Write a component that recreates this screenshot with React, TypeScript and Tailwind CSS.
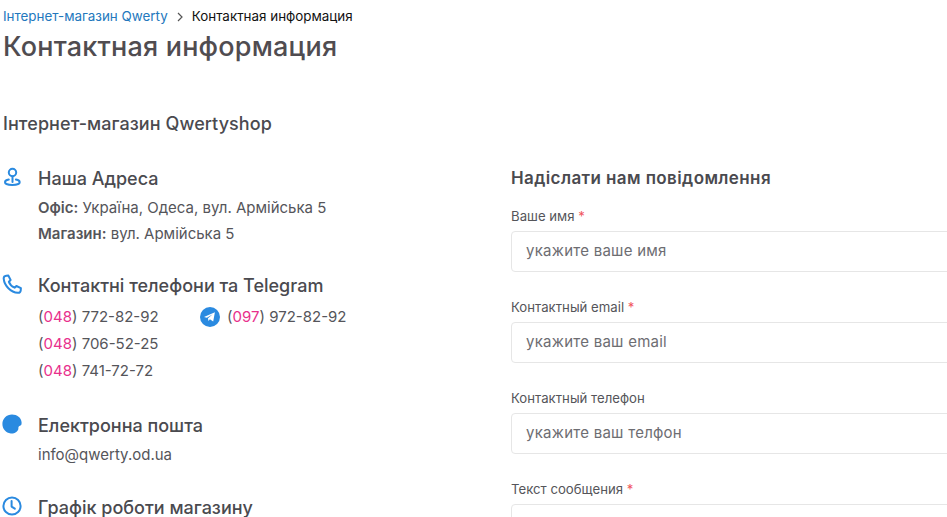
import React from "react";

function PinIcon() {
  return (
    <svg width="20" height="20" viewBox="0 0 20 20" fill="none" stroke="#2a8ae0" strokeWidth="2" strokeLinecap="round" className="shrink-0">
      <circle cx="10.5" cy="5.5" r="3.7" />
      <path d="M10.5 9.5V15" />
      <path d="M6.8 12.6C4.3 13.1 3 14 3 15.2 3 16.8 6.2 18 10.3 18s7.4-1.2 7.4-2.8c0-1.2-1.3-2.1-3.8-2.6" />
    </svg>
  );
}

function PhoneIcon() {
  return (
    <svg width="20" height="20" viewBox="0 0 20 20" fill="none" stroke="#2a8ae0" strokeWidth="2" strokeLinejoin="round" strokeLinecap="round" className="shrink-0">
      <path d="M4.2 1.8 6.4 1.6 8.6 6 6.9 7.8C7.8 10.4 10.2 12.6 12.6 13.7L14.4 12 18.9 14.2 18.7 16.6C18.5 18 17.2 18.9 15.9 18.8 8.8 18.2 2.3 11.8 1.7 4.6 1.6 3.2 2.8 2 4.2 1.8Z" />
    </svg>
  );
}

function TelegramIcon() {
  return (
    <svg width="20" height="20" viewBox="0 0 20 20" className="shrink-0">
      <circle cx="10" cy="10" r="10" fill="#2a8ae0" />
      <path d="M4 9.9 14.9 5.3 13.2 14.6 9.9 12.3 8.4 13.9 8 11.3 12.7 7.3 6.9 10.8Z" fill="#fff" />
    </svg>
  );
}

function BlobIcon() {
  return (
    <svg width="20" height="20" viewBox="0 0 20 20" className="shrink-0">
      <path d="M10 .6C15 .6 19.4 3.8 19.6 8.4 19.7 10.6 19.2 11.2 18.4 11.4 17 11.8 16.2 12.8 16.4 14.3 16.6 16 15.2 18 12.6 18.9 11 19.4 9.8 19.6 8.8 19.4 3.8 18.8.4 15 .4 10 .4 4.8 4.6.6 10 .6Z" fill="#2a8ae0" />
    </svg>
  );
}

function ClockIcon() {
  return (
    <svg width="20" height="20" viewBox="0 0 20 20" fill="none" stroke="#2a8ae0" strokeWidth="2" strokeLinecap="round" strokeLinejoin="round" className="shrink-0">
      <circle cx="10" cy="10" r="8.6" />
      <path d="M9.6 5v5.6l3.2 2" />
    </svg>
  );
}

function Code({ n }: { n: string }) {
  return (
    <span>
      (<span className="text-[#e8308c]">{n}</span>)
    </span>
  );
}

function Heading({ children }: { children: React.ReactNode }) {
  return <h3 className="text-[18px] leading-[24px] font-medium text-[#4a4a4f]">{children}</h3>;
}

function Field({ label, required, placeholder }: { label: string; required?: boolean; placeholder: string }) {
  return (
    <div className="mb-[26px]">
      <div className="text-[13.2px] leading-[18px] text-[#55555a] mb-[6px]">
        {label}
        {required && <span className="text-[#f0525a]"> *</span>}
      </div>
      <div className="w-[600px] h-[41px] border border-[#e6e6e6] rounded-[4px] pl-[14px] flex items-center text-[15px] tracking-[0.25px] text-[#6d6d72] bg-white">
        {placeholder}
      </div>
    </div>
  );
}

export default function App() {
  return (
    <div className="h-[517px] w-[947px] overflow-hidden bg-white font-['Inter','Noto_Sans',sans-serif]">
      <div className="pl-[3px]">
        <div className="flex items-center h-[17px] mt-[8px] text-[13.4px] leading-[17px]">
          <span className="text-[#2378bd]">Інтернет-магазин Qwerty</span>
          <svg width="8" height="10" viewBox="0 0 8 10" fill="none" stroke="#555" strokeWidth="1.2" className="mx-[8px]">
            <path d="M2 1l4 4-4 4" />
          </svg>
          <span className="text-[#111]">Контактная информация</span>
        </div>
        <h1 className="mt-[6px] text-[27px] leading-[32px] font-medium text-[#504c50] tracking-[0.2px]">Контактная информация</h1>
        <h2 className="mt-[49px] text-[18px] leading-[24px] font-medium tracking-[0.07px] text-[#4a4a4f]">Інтернет-магазин Qwertyshop</h2>
      </div>
      <div className="flex mt-[29px]">
        <div className="w-[511px] shrink-0 pt-[2px]">
          <div className="flex gap-[16px] pl-[2px]">
            <PinIcon />
            <div className="text-[15px] text-[#55555a]">
              <Heading>Наша Адреса</Heading>
              <div className="mt-[4px] leading-[26px]"><b className="font-semibold">Офіс:</b> Україна, Одеса, вул. Армійська 5</div>
              <div className="leading-[26px]"><b className="font-semibold">Магазин:</b> вул. Армійська 5</div>
            </div>
          </div>
          <div className="flex gap-[16px] pl-[2px] mt-[27px]">
            <PhoneIcon />
            <div className="text-[15px] text-[#55555a]">
              <Heading>Контактні телефони та Telegram</Heading>
              <div className="mt-[5px] leading-[27px] flex items-center">
                <span className="w-[162px]"><Code n="048" /> 772-82-92</span>
                <TelegramIcon />
                <span className="ml-[7px]"><Code n="097" /> 972-82-92</span>
              </div>
              <div className="leading-[27px]"><Code n="048" /> 706-52-25</div>
              <div className="leading-[27px]"><Code n="048" /> 741-72-72</div>
            </div>
          </div>
          <div className="flex gap-[16px] pl-[2px] mt-[30px]">
            <BlobIcon />
            <div className="text-[15px] text-[#55555a]">
              <Heading>Електронна пошта</Heading>
              <div className="mt-[4px] leading-[26px]">info@qwerty.od.ua</div>
            </div>
          </div>
          <div className="flex gap-[16px] pl-[2px] mt-[28px]">
            <ClockIcon />
            <Heading>Графік роботи магазину</Heading>
          </div>
        </div>
        <div className="flex-1 min-w-0 pt-[1px]">
          <h3 className="text-[17px] leading-[24px] font-semibold tracking-[0.4px] text-[#4a4a4f]">Надіслати нам повідомлення</h3>
          <div className="mt-[17px]">
            <Field label="Ваше имя" required placeholder="укажите ваше имя" />
            <Field label="Контактный email" required placeholder="укажите ваш email" />
            <Field label="Контактный телефон" placeholder="укажите ваш телфон" />
            <Field label="Текст сообщения" required placeholder="" />
          </div>
        </div>
      </div>
    </div>
  );
}
